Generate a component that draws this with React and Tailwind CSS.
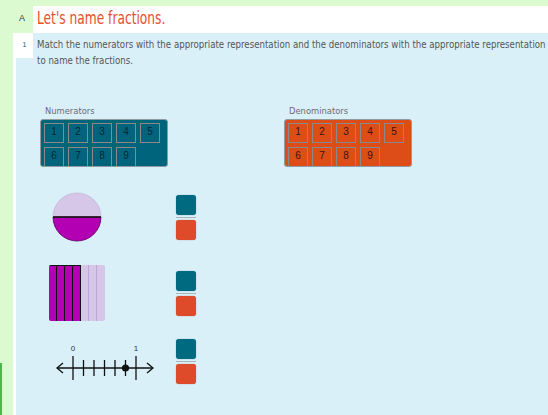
import React from "react";

const narrow = "font-['DejaVu_Sans_Condensed','Liberation_Sans',sans-serif]";

const NumberBox = ({ label, bg, textColor }) => (
  <div className="flex flex-col w-[128px] shrink-0">
    <span className={`${narrow} text-[9.3px] leading-[12px] text-[#6b6b6b] ml-[5px] mb-[2px]`}>{label}</span>
    <div className={`h-[48px] w-[128px] rounded-[3px] border border-[#8f9ba0] overflow-hidden pt-[3px] pl-[3px] ${bg}`}>
      <div className="grid grid-cols-[repeat(5,20px)] gap-[4px]">
        {[1, 2, 3, 4, 5, 6, 7, 8, 9].map((n) => (
          <div
            key={n}
            className={`h-[20px] w-[20px] border border-[#8a8a8a] flex justify-center pt-[2px] text-[10px] leading-[12px] font-['Liberation_Sans',sans-serif] ${textColor}`}
          >
            {n}
          </div>
        ))}
      </div>
    </div>
  </div>
);

// teal numerator slot over orange denominator slot
const Slots = () => (
  <div className="flex flex-col w-[20px]">
    <div className="h-[20px] w-[20px] rounded-[3px] bg-[#006a80] shadow-[0_0_1px_#5a7f8a]" />
    <div className="h-[1px] w-[20px] bg-[#aab4b8] my-[2px]" />
    <div className="h-[20px] w-[20px] rounded-[3px] bg-[#dd4b2a] shadow-[0_0_1px_#8a5a4a]" />
  </div>
);

const HalfCircle = () => (
  <svg width="50" height="50" viewBox="0 0 50 50">
    <path d="M1 25 A24 24 0 0 1 49 25 Z" fill="#d6c6e8" stroke="#c6b6d8" strokeWidth="0.8" />
    <path d="M1 25 A24 24 0 0 0 49 25 Z" fill="#b200b2" stroke="#5a005a" strokeWidth="0.8" />
    <line x1="1" y1="25" x2="49" y2="25" stroke="#111" strokeWidth="1.4" />
  </svg>
);

// 4 of 7 strips shaded
const StripBar = () => (
  <div className="flex h-[56px] w-[56px] rounded-[2px] overflow-hidden">
    {[0, 1, 2, 3].map((i) => (
      <div key={i} className="w-[8px] h-full bg-[#b200b2] border-t border-r border-[#111]" />
    ))}
    {[0, 1, 2].map((i) => (
      <div key={i} className={`w-[8px] h-full bg-[#d6c6e8] ${i < 2 ? "border-r border-[#bfa8d6]" : ""}`} />
    ))}
  </div>
);

const NumberLine = () => {
  const x0 = 23;
  const step = 10.5;
  return (
    <svg width="110" height="44" viewBox="0 0 110 44" className="font-['Liberation_Sans',sans-serif]">
      <text x={x0} y="11" fontSize="8" textAnchor="middle" fill="#333">0</text>
      <text x={x0 + step * 6} y="11" fontSize="8" textAnchor="middle" fill="#333">1</text>
      <line x1="7" y1="28" x2="103" y2="28" stroke="#111" strokeWidth="1.3" />
      <polyline points="13,23 7,28 13,33" fill="none" stroke="#111" strokeWidth="1.3" />
      <polyline points="97,23 103,28 97,33" fill="none" stroke="#111" strokeWidth="1.3" />
      {[0, 1, 2, 3, 4, 5, 6].map((i) => (
        <line
          key={i}
          x1={x0 + step * i}
          y1={i === 0 || i === 6 ? 16 : 20}
          x2={x0 + step * i}
          y2={i === 0 || i === 6 ? 40 : 36}
          stroke="#111"
          strokeWidth="1.3"
        />
      ))}
      <circle cx={x0 + step * 5} cy="28" r="3.6" fill="#111" />
    </svg>
  );
};

export default function App() {
  return (
    <div className="w-[548px] h-[415px] bg-[#dcfad0] flex flex-col overflow-hidden">
      <div className="h-[6px] shrink-0" />
      {/* heading */}
      <div className="flex h-[27px] shrink-0">
        <div className="w-[33px] shrink-0 flex justify-end pr-[8px] pt-[7px] text-[9px] leading-[10px] text-[#333] font-['Liberation_Sans',sans-serif]">
          A
        </div>
        <div className={`flex-1 bg-white pl-[4px] pt-[1px] ${narrow} text-[17px] leading-[22px] text-[#e4502c]`}>
          <span className="inline-block origin-left scale-x-[0.8]">Let's name fractions.</span>
        </div>
      </div>
      {/* question body */}
      <div className="flex flex-1 relative">
        <div className="w-[13px] shrink-0" />
        <div className="absolute left-0 bottom-0 w-[2px] h-[52px] bg-[#4cb84c]" />
        <div className="flex flex-1 min-w-0 border-l-[3px] border-white bg-[#daf0f9]">
          <div className="w-[17px] h-[25px] shrink-0 bg-white flex justify-center pt-[7px] text-[8px] leading-[9px] text-[#3c6e8c] font-['Liberation_Sans',sans-serif]">
            1
          </div>
          <div className="flex flex-col flex-1 min-w-0 pt-[4px]">
            <p className={`${narrow} text-[9.6px] leading-[16px] text-[#555] pl-[4px] whitespace-nowrap`}>
              Match the numerators with the appropriate representation and the denominators with the appropriate representation
              <br />
              to name the fractions.
            </p>
            <div className="flex gap-[116px] ml-[7px] mt-[36px]">
              <NumberBox label="Numerators" bg="bg-[#00657c]" textColor="text-[#0b2530]" />
              <NumberBox label="Denominators" bg="bg-[#dc4d17]" textColor="text-[#3a150a]" />
            </div>
            <div className="flex items-center ml-[19px] mt-[25px]">
              <HalfCircle />
              <div className="ml-[74px]">
                <Slots />
              </div>
            </div>
            <div className="flex items-center ml-[16px] mt-[23px]">
              <StripBar />
              <div className="ml-[71px]">
                <Slots />
              </div>
            </div>
            <div className="flex items-center ml-[17px] mt-[18px]">
              <NumberLine />
              <div className="ml-[16px]">
                <Slots />
              </div>
            </div>
          </div>
        </div>
      </div>
    </div>
  );
}
